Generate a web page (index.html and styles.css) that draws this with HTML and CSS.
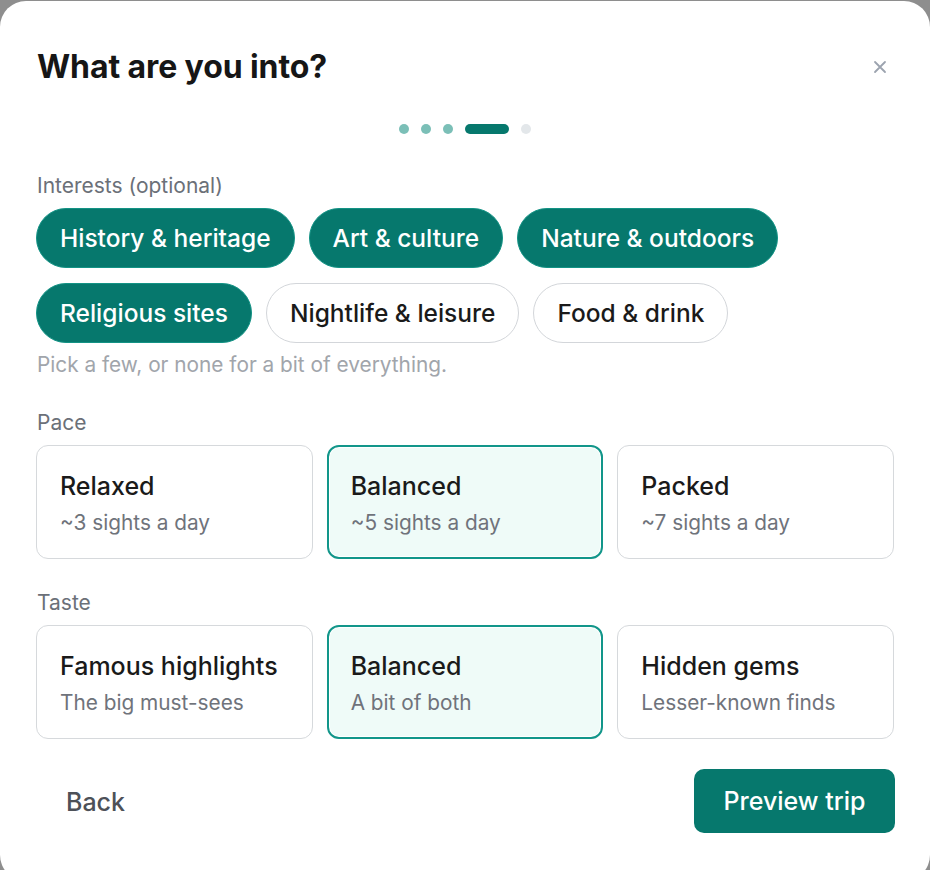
FILE: index.html
```html
<!DOCTYPE html>
<html lang="en">
<head>
<meta charset="utf-8">
<title>What are you into?</title>
<link rel="stylesheet" href="styles.css">
</head>
<body>
<div class="modal">
  <header class="head">
    <h1 class="title">What are you into?</h1>
    <button class="close" aria-label="Close">
      <svg width="14" height="14" viewBox="0 0 14 14"><path d="M2 2 L12 12 M12 2 L2 12" stroke="#9ca3af" stroke-width="1.8" stroke-linecap="round"/></svg>
    </button>
  </header>
  <div class="steps">
    <span class="dot done"></span><span class="dot done"></span><span class="dot done"></span><span class="dot current"></span><span class="dot"></span>
  </div>

  <section class="section interests">
    <div class="label">Interests (optional)</div>
    <div class="chips">
      <button class="chip on">History &amp; heritage</button>
      <button class="chip on">Art &amp; culture</button>
      <button class="chip on">Nature &amp; outdoors</button>
      <button class="chip on">Religious sites</button>
      <button class="chip">Nightlife &amp; leisure</button>
      <button class="chip">Food &amp; drink</button>
    </div>
    <div class="hint">Pick a few, or none for a bit of everything.</div>
  </section>

  <section class="section pace">
    <div class="label">Pace</div>
    <div class="cards">
      <button class="card"><span class="card-title">Relaxed</span><span class="card-sub">~3 sights a day</span></button>
      <button class="card on"><span class="card-title">Balanced</span><span class="card-sub">~5 sights a day</span></button>
      <button class="card"><span class="card-title">Packed</span><span class="card-sub">~7 sights a day</span></button>
    </div>
  </section>

  <section class="section taste">
    <div class="label">Taste</div>
    <div class="cards">
      <button class="card"><span class="card-title">Famous highlights</span><span class="card-sub">The big must-sees</span></button>
      <button class="card on"><span class="card-title">Balanced</span><span class="card-sub">A bit of both</span></button>
      <button class="card"><span class="card-title">Hidden gems</span><span class="card-sub">Lesser-known finds</span></button>
    </div>
  </section>

  <footer class="foot">
    <button class="back">Back</button>
    <button class="primary">Preview trip</button>
  </footer>
</div>
</body>
</html>
```

FILE: styles.css
```css
* { box-sizing: border-box; }
html, body { margin: 0; padding: 0; }
body {
  background: #8e8e8e;
  font-family: Inter, "Noto Sans", sans-serif;
  color: #1a1a1a;
  height: 870px;
  overflow: hidden;
}
button { font-family: inherit; cursor: pointer; }
.modal {
  margin-top: 1px;
  height: 880px;
  background: #fff;
  border-radius: 26px;
  padding: 0 36px;
}
.head {
  display: flex;
  align-items: center;
  justify-content: space-between;
  padding-top: 47px;
}
.title {
  margin: 0 0 0 1px;
  font-size: 32px;
  font-weight: 700;
  letter-spacing: -0.1px;
  line-height: 38px;
  color: #161616;
}
.close {
  border: 0;
  background: none;
  padding: 0;
  width: 14px;
  height: 14px;
  margin-right: 7px;
  display: flex;
}
.steps {
  display: flex;
  justify-content: center;
  gap: 12px;
  margin-top: 38px;
}
.dot {
  width: 10px;
  height: 10px;
  border-radius: 5px;
  background: #e3e7ea;
}
.dot.done { background: #7bbfb7; }
.dot.current { width: 44px; background: #06786d; }
.interests { margin-top: 39px; }
.pace { margin-top: 32px; }
.taste { margin-top: 31px; }
.label {
  font-size: 21px;
  line-height: 26px;
  color: #6b7078;
  margin-left: 1px;
}
.chips {
  display: flex;
  flex-wrap: wrap;
  gap: 15px 14px;
  margin-top: 9px;
}
.chip {
  height: 60px;
  padding: 0 23px;
  border-radius: 30px;
  border: 1px solid #d3d6da;
  background: #fff;
  font-size: 24.5px;
  color: #1a1a1a;
  font-weight: 500;
}
.chip.on {
  background: #06786d;
  border-color: #139385;
  color: #fff;
}
.hint {
  margin-top: 9px;
  font-size: 20.8px;
  line-height: 26px;
  color: #a1a5ab;
  margin-left: 1px;
}
.cards {
  display: grid;
  grid-template-columns: 1fr 1fr 1fr;
  gap: 14px;
  margin-top: 9px;
}
.card {
  height: 114px;
  border: 1px solid #d6d9dc;
  border-radius: 12px;
  background: #fff;
  display: flex;
  flex-direction: column;
  align-items: flex-start;
  justify-content: center;
  padding: 0 23px 0 23px;
  text-align: left;
}
.card.on {
  background: #effbf8;
  border: 2px solid #12968a;
  box-shadow: inset 0 0 0 1px #fff;
  padding: 0 22px;
}
.card-title {
  font-size: 25px;
  line-height: 30px;
  font-weight: 500;
  color: #1a1a1a;
  margin-top: 2px;
}
.card-sub {
  margin-top: 9px;
  font-size: 20.8px;
  line-height: 26px;
  color: #6f737b;
}
.foot {
  display: flex;
  justify-content: space-between;
  align-items: center;
  margin-top: 30px;
}
.back {
  border: 0;
  background: none;
  font-size: 25px;
  font-weight: 500;
  color: #4d5158;
  padding: 2px 30px 0;
  height: 64px;
}
.primary {
  height: 64px;
  width: 201px;
  border: 0;
  border-radius: 10px;
  background: #06786d;
  color: #fff;
  font-size: 25px;
  font-weight: 500;
  margin-right: -1px;
}
```
